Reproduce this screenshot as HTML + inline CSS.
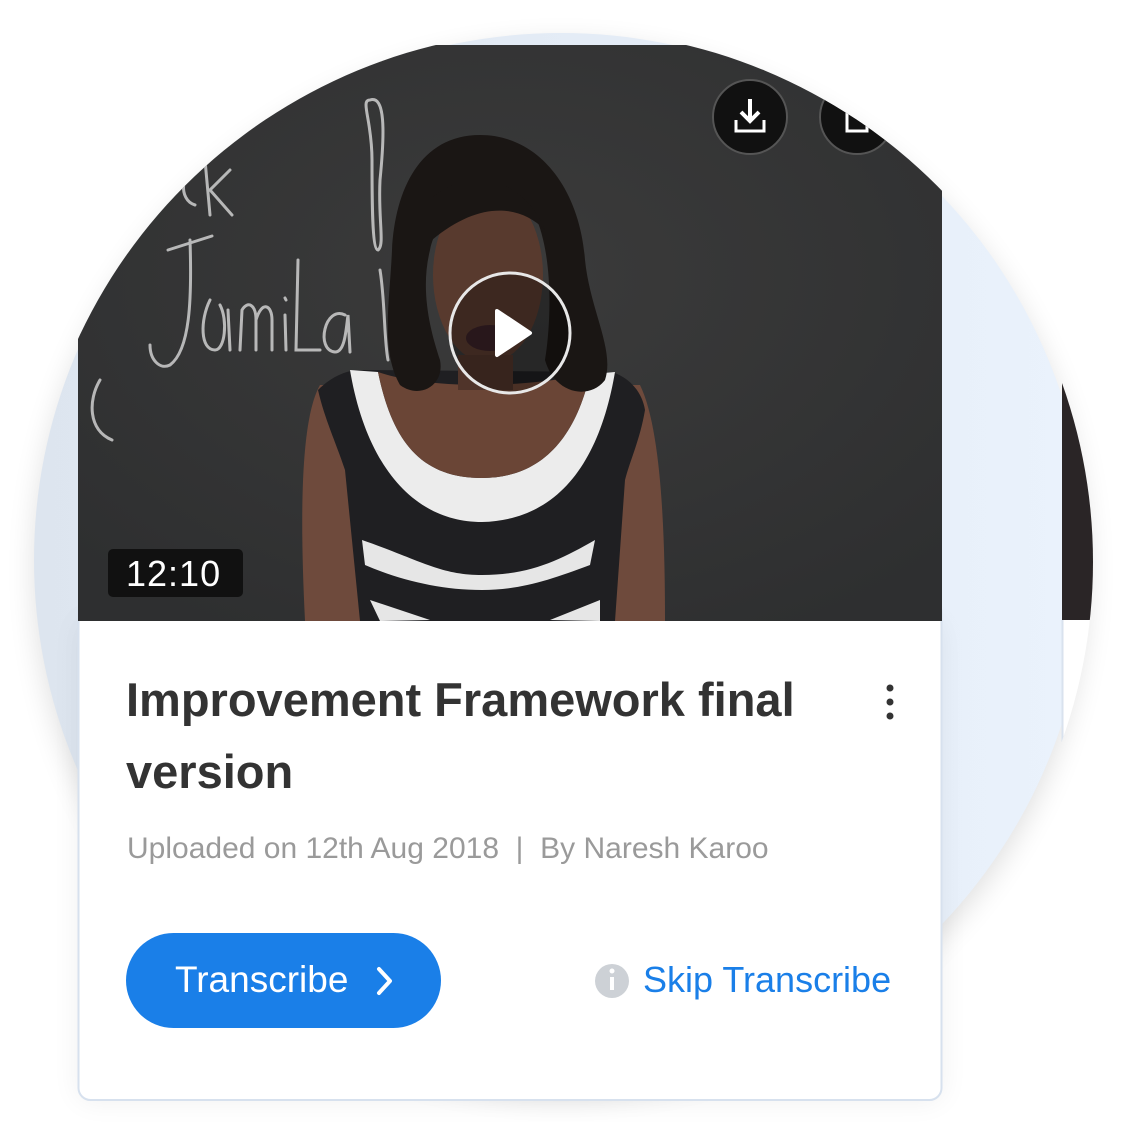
<!DOCTYPE html>
<html><head><meta charset="utf-8"><style>
html,body{margin:0;padding:0;width:1122px;height:1122px;overflow:hidden;background:#fff;font-family:"Liberation Sans",sans-serif}
.t{position:absolute;white-space:nowrap}
</style></head><body>
<svg width="1122" height="1122" style="position:absolute;left:0;top:0">
<defs>
<linearGradient id="bg" x1="0" x2="1" y1="0" y2="0"><stop offset="0" stop-color="#dde5ef"/><stop offset="1" stop-color="#eaf2fc"/></linearGradient>
<filter id="sh" x="-20%" y="-20%" width="140%" height="140%"><feGaussianBlur stdDeviation="14"/></filter>
<clipPath id="cc"><circle cx="561" cy="562" r="532"/></clipPath>
<radialGradient id="board" cx="0.5" cy="0.4" r="0.7"><stop offset="0" stop-color="#3b3b3b"/><stop offset="1" stop-color="#2e2f30"/></radialGradient>
</defs>
<circle cx="561" cy="570" r="527" fill="#000" opacity="0.12" filter="url(#sh)"/>
<circle cx="561" cy="560" r="527" fill="url(#bg)"/>
<rect x="78" y="620" width="864" height="481" rx="12" fill="#000" opacity="0.06" filter="url(#sh)"/>
<g clip-path="url(#cc)">
<rect x="1062" y="300" width="60" height="320" fill="#2a2526"/>
<rect x="1062" y="620" width="60" height="500" fill="#fff"/>
<line x1="1062.5" y1="620" x2="1062.5" y2="1100" stroke="#d9e2ee" stroke-width="2"/>
</g>
<rect x="78.5" y="600" width="863" height="500" rx="12" fill="#fff" stroke="#d7e1ee" stroke-width="2"/>
<g clip-path="url(#cc)">
<rect x="78" y="45" width="864" height="576" fill="url(#board)"/>
<g fill="none" stroke="#cfcfcf" stroke-width="3" stroke-linecap="round" opacity="0.85">
<path d="M168 250 L212 236 M190 240 C192 300 190 350 170 365 C160 370 150 360 150 345"/>
<path d="M210 300 C200 320 200 350 215 350 C225 350 228 320 220 305 M228 310 L230 350"/>
<path d="M240 350 L242 310 C248 300 256 305 256 320 L256 350 M256 320 C262 300 272 305 272 320 L272 350"/>
<path d="M285 315 L286 350 M285 298 L286 300"/>
<path d="M298 260 L296 350 L320 350"/>
<path d="M345 315 C325 305 315 350 335 352 C345 352 346 330 348 315 L350 352"/>
<path d="M200 165 C180 170 178 200 195 205 M205 160 L210 215 M230 170 L210 190 L232 215"/>
<path d="M370 100 C385 95 385 130 380 180 C378 220 385 245 378 250 C372 250 372 200 372 160 C372 120 360 100 370 100"/>
<path d="M380 270 C385 300 384 340 388 360"/>
<path d="M100 380 C88 400 88 430 112 440"/>
</g>
<path d="M320 385 C300 420 300 520 305 621 L665 621 C665 540 662 430 640 385 Z" fill="#6e4a3c"/>
<path d="M318 390 C330 378 345 370 360 370 L612 372 C630 378 642 392 645 410 C640 440 630 460 625 480 L615 621 L360 621 L345 470 C335 440 325 420 318 390 Z" fill="#1f1f22"/>
<path d="M350 370 C365 460 410 522 482 522 C560 520 600 460 615 372 L590 374 C575 440 540 478 482 478 C420 478 392 440 378 372 Z" fill="#ececec"/>
<path d="M378 372 C392 440 420 478 482 478 C540 478 575 440 590 374 C560 380 520 385 480 385 C440 385 400 380 378 372 Z" fill="#6a4536"/>
<path d="M362 540 C420 560 440 575 482 575 C530 575 560 560 595 540 L590 565 C550 580 520 590 482 590 C440 590 400 580 365 565 Z" fill="#e6e6e6"/>
<path d="M370 600 L430 620 L380 621 Z M600 600 L550 620 L600 621Z" fill="#e6e6e6"/>
<path d="M480 135 C420 135 395 190 392 250 C390 300 380 350 400 385 C420 400 445 385 440 360 C430 330 420 290 430 250 C440 200 500 185 535 215 C555 260 550 330 545 360 C555 395 590 400 605 380 C615 350 590 310 585 260 C580 190 540 135 480 135 Z" fill="#1a1614"/>
<ellipse cx="488" cy="275" rx="55" ry="88" fill="#583a2e"/>
<path d="M430 200 C460 170 520 170 545 230 C520 205 480 200 432 240 Z" fill="#1a1614"/>
<ellipse cx="490" cy="338" rx="24" ry="13" fill="#3a2228"/>
<rect x="458" y="355" width="55" height="35" fill="#50342a"/>
<circle cx="750" cy="117" r="37" fill="#111" stroke="#555" stroke-width="2"/>
<path d="M750 99 V121 M741 112 L750 121 L759 112" stroke="#fff" stroke-width="4" fill="none"/>
<path d="M736 120 V131 H764 V120" stroke="#fff" stroke-width="3" fill="none"/>
<circle cx="857" cy="117" r="37" fill="#111" stroke="#555" stroke-width="2"/>
<rect x="847" y="107" width="20" height="24" stroke="#fff" stroke-width="3" fill="none"/>
<circle cx="510" cy="333" r="60" fill="#000" fill-opacity="0.3" stroke="#e8e8e8" stroke-width="3"/>
<path d="M497 311 L530 333 L497 355 Z" fill="#fff" stroke="#fff" stroke-width="4" stroke-linejoin="round"/>
</g>
<rect x="108" y="549" width="135" height="48" rx="5" fill="#111"/>
<circle cx="890" cy="688" r="3.5" fill="#333"/><circle cx="890" cy="702" r="3.5" fill="#333"/><circle cx="890" cy="716" r="3.5" fill="#333"/>
<rect x="126" y="933" width="315" height="95" rx="47.5" fill="#1a7fe8"/>
<path d="M379 969 L390 981 L379 993" stroke="#fff" stroke-width="4" fill="none" stroke-linecap="round" stroke-linejoin="round"/>
<circle cx="612" cy="981" r="17" fill="#cdd1d6"/>
<rect x="610" y="977" width="4" height="13" fill="#fff"/><circle cx="612" cy="971" r="2.5" fill="#fff"/>
</svg>
<div class="t" style="left:126px;top:553px;font-size:36px;color:#fff;letter-spacing:1px">12:10</div>
<div class="t" style="left:126px;top:664px;font-size:47px;font-weight:bold;color:#333;line-height:72px">Improvement Framework final<br>version</div>
<div class="t" style="left:127px;top:832px;font-size:30px;color:#9a9a9a">Uploaded on 12th Aug 2018 &nbsp;|&nbsp; By Naresh Karoo</div>
<div class="t" style="left:175px;top:959px;font-size:37px;color:#fff">Transcribe</div>
<div class="t" style="left:643px;top:959px;font-size:36px;color:#1a7fe8">Skip Transcribe</div>
</body></html>
